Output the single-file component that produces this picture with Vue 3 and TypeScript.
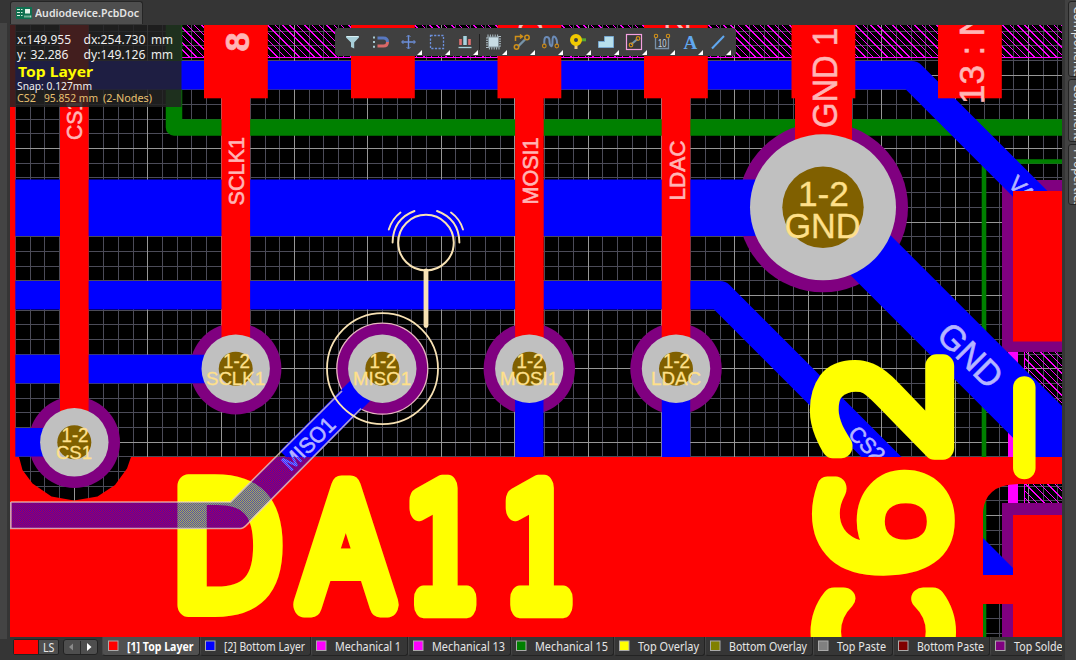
<script setup lang="ts">
interface Label { t: string; x: number; y: number; s: number; len: number; r?: number; c: string; b?: boolean }
interface Glyph { t: string; cx: number; cy: number; w: number; h: number; r: number; stroke: number }
interface LayerTab { name: string; color: string; width: number; pad: number; len: number; active?: boolean }

const minorX: number[] = []
const majorX: number[] = []
const minorY: number[] = []
const majorY: number[] = []
for (let k = -5; k < 70; k++) {
  const x = Math.floor(74.3 + k * 14.68)
  const y = Math.floor(75.2 + k * 14.68)
  ;(k % 5 === 0 ? majorX : minorX).push(x)
  ;(k % 5 === 0 ? majorY : minorY).push(y)
}

const topHatch = Array.from({ length: 128 }, (_, i) => 150 + i * 7.35)
const sideHatch = Array.from({ length: 30 }, (_, i) => 842 + i * 7.35)

// Rows of one-pixel dashes, shifted by one pixel on every other row.
const ditherRows = Array.from({ length: 72 }, (_, i) => 457 + i)

const padTops = [204, 351, 497.5, 644, 791.5, 938]

const PINK = '#ffb5b5'
const PALE = '#b5b5ff'
const GOLD = '#ffe08a'

const copperLabels: Label[] = [
  { t: 'CS1', x: 82, y: 140, s: 22, len: 41, r: -90, c: PINK },
  { t: '8', x: 249, y: 51.5, s: 34, len: 19, r: -90, c: PINK, b: true },
  { t: 'SCLK1', x: 244, y: 205.5, s: 22, len: 68.5, r: -90, c: PINK },
  { t: '10', x: 542, y: 57, s: 34, len: 38, r: -90, c: PINK },
  { t: 'MOSI1', x: 537.5, y: 204.5, s: 22, len: 67, r: -90, c: PINK },
  { t: '12', x: 689, y: 55, s: 34, len: 38, r: -90, c: PINK },
  { t: 'LDAC', x: 684.5, y: 200.5, s: 22, len: 60, r: -90, c: PINK },
  { t: 'GND 1', x: 837, y: 128, s: 35.5, len: 100, r: -90, c: PINK },
  { t: '13 : N', x: 984, y: 104, s: 35.5, len: 93, r: -90, c: PINK },
]

const diagLabels: Label[] = [
  { t: 'GND', x: 935, y: 337, s: 35, len: 76, r: 45, c: PALE },
  { t: 'CS2', x: 847, y: 435, s: 22, len: 41, r: 45, c: PALE },
  { t: 'VA', x: 1007, y: 185, s: 22, len: 28, r: 45, c: PALE },
]

const padLabels: Label[] = [
  { t: '1-2', x: 223, y: 368, s: 19.5, len: 27, c: GOLD },
  { t: 'SCLK1', x: 206, y: 385, s: 18.5, len: 59, c: GOLD },
  { t: '1-2', x: 369.5, y: 368, s: 19.5, len: 27, c: GOLD },
  { t: 'MISO1', x: 353, y: 385, s: 18.5, len: 58, c: GOLD },
  { t: '1-2', x: 516.5, y: 368, s: 19.5, len: 27, c: GOLD },
  { t: 'MOSI1', x: 500, y: 385, s: 18.5, len: 58, c: GOLD },
  { t: '1-2', x: 663, y: 368, s: 19.5, len: 27, c: GOLD },
  { t: 'LDAC', x: 651, y: 385, s: 18.5, len: 50, c: GOLD },
  { t: '1-2', x: 61.5, y: 441.5, s: 19.5, len: 27, c: GOLD },
  { t: 'CS1', x: 56, y: 458.5, s: 18.5, len: 36, c: GOLD },
  { t: '1-2', x: 798, y: 205.5, s: 35, len: 51, c: GOLD },
  { t: 'GND', x: 784.5, y: 237.5, s: 35, len: 76, c: GOLD },
]

const pads = [
  { x: 235.7, y: 368.7 },
  { x: 382.3, y: 368.7 },
  { x: 529.3, y: 368.7 },
  { x: 676, y: 368.7 },
  { x: 74.3, y: 442.3 },
]

const silk: Glyph[] = [
  { t: 'D', cx: 230.2, cy: 546, w: 107, h: 141, r: 0, stroke: 23 },
  { t: 'A', cx: 346, cy: 546, w: 110, h: 140, r: 0, stroke: 24 },
  { t: '1', cx: 442.4, cy: 546, w: 72, h: 140, r: 0, stroke: 23 },
  { t: '1', cx: 538.6, cy: 546, w: 72, h: 140, r: 0, stroke: 23 },
  { t: 'C', cx: 883, cy: 639, w: 106, h: 144.5, r: -90, stroke: 23 },
  { t: '6', cx: 883, cy: 523.3, w: 106, h: 144.5, r: -90, stroke: 23 },
  { t: '2', cx: 882.5, cy: 407.5, w: 107, h: 144.5, r: -90, stroke: 23 },
]

const ctx = document.createElement('canvas').getContext('2d')!
ctx.font = '200 100px "DejaVu Sans"'

// Scales a glyph so that its inked box, stroke included, fills the given size.
function fit(g: Glyph): string {
  const m = ctx.measureText(g.t)
  const l = m.actualBoundingBoxLeft
  const r = m.actualBoundingBoxRight
  const a = m.actualBoundingBoxAscent
  const d = m.actualBoundingBoxDescent
  const sx = (g.w - g.stroke) / (l + r)
  const sy = (g.h - g.stroke) / (a + d)
  return `translate(${g.cx} ${g.cy}) rotate(${g.r}) scale(${sx} ${sy}) translate(${-(r - l) / 2} ${(a - d) / 2})`
}

function spin(l: Label): string {
  return `translate(${l.x} ${l.y}) rotate(${l.r ?? 0})`
}

const hud: Label[] = [
  { t: 'x:149.955', x: 17, y: 44, s: 12.5, len: 54, c: '#f0f0f0' },
  { t: 'dx:254.730', x: 83.5, y: 44, s: 12.5, len: 62, c: '#f0f0f0' },
  { t: 'mm', x: 151, y: 44, s: 12.5, len: 22, c: '#f0f0f0' },
  { t: 'y:', x: 17, y: 59, s: 12.5, len: 9, c: '#f0f0f0' },
  { t: '32.286', x: 30.5, y: 59, s: 12.5, len: 38, c: '#f0f0f0' },
  { t: 'dy:149.126', x: 83.5, y: 59, s: 12.5, len: 62, c: '#f0f0f0' },
  { t: 'mm', x: 151, y: 59, s: 12.5, len: 22, c: '#f0f0f0' },
  { t: 'Top Layer', x: 18, y: 77, s: 14.5, len: 75, c: '#ffff00', b: true },
  { t: 'Snap: 0.127mm', x: 17, y: 90, s: 11, len: 75, c: '#f0f0f0' },
  { t: 'CS2', x: 17, y: 102, s: 11, len: 19, c: '#e8c070' },
  { t: '95.852 mm', x: 44, y: 102, s: 11, len: 54, c: '#e8c070' },
  { t: '(2-Nodes)', x: 103, y: 102, s: 11, len: 49, c: '#e8c070' },
]

const menuMarks = [419.5, 447.5, 475.5, 504.5, 532.5, 560.5, 588.5, 616.5, 644.5, 672.5, 700.5, 728.5]

const tabs: LayerTab[] = [
  { name: '[1] Top Layer', color: '#ff0000', width: 98, pad: 8, len: 66.5, active: true },
  { name: '[2] Bottom Layer', color: '#0000ff', width: 111, pad: 7, len: 81 },
  { name: 'Mechanical 1', color: '#ff00ff', width: 97, pad: 7, len: 66 },
  { name: 'Mechanical 13', color: '#ff00ff', width: 103, pad: 7, len: 73 },
  { name: 'Mechanical 15', color: '#008000', width: 103, pad: 7, len: 73 },
  { name: 'Top Overlay', color: '#ffff00', width: 91, pad: 7, len: 61 },
  { name: 'Bottom Overlay', color: '#808000', width: 108, pad: 7, len: 78 },
  { name: 'Top Paste', color: '#808080', width: 80, pad: 7, len: 49 },
  { name: 'Bottom Paste', color: '#800000', width: 97, pad: 7, len: 67 },
  { name: 'Top Solder', color: '#800080', width: 90, pad: 7, len: 53 },
]

const panels = [
  { name: 'Components', height: 76 },
  { name: 'Comments', height: 63 },
  { name: 'Properties', height: 61 },
]
</script>

<template>
  <div class="app">
    <aside class="left"></aside>
    <main class="main">
      <header class="docs">
        <div class="doc">
          <svg width="16" height="12" viewBox="0 0 16 12">
            <rect width="16" height="12" fill="#0f7050" />
            <path d="M1 2.500h3M1 5.500h3M1 8.500h3M5 2.500h1.500M5 5.500h1.500M5 8.500h1.500" stroke="#d8f0e0" stroke-width="1" />
            <path d="M9 2h5v4.500H9z" fill="#e4f4ea" />
            <path d="M8.500 9.500h1M10.500 9.500h1M12.500 9.500h1M14.200 9.500h1" stroke="#d8f0e0" stroke-width="2" />
          </svg>
          <svg width="108" height="18"><text x="0" y="13" textLength="104" lengthAdjust="spacingAndGlyphs" class="doc-name">Audiodevice.PcbDoc</text></svg>
        </div>
      </header>

      <svg class="board" width="1052" height="612" viewBox="10 25 1052 612">
        <defs>
          <clipPath id="topBand"><rect x="182" y="25" width="880" height="33" /></clipPath>
          <clipPath id="sideBand"><path d="M1024 352H1062V504H1024Z" /></clipPath>
          <clipPath id="dither"><path d="M10 502H230L275 457H314L255 516Q243 529 240 529H10Z" /></clipPath>
          <clipPath id="openArea"><rect x="10" y="25" width="1052" height="432" /></clipPath>
        </defs>
        <rect x="10" y="25" width="1052" height="612" fill="#000" />
        <g fill="#4b4b58" shape-rendering="crispEdges">
          <rect v-for="x in minorX" :key="'a' + x" :x="x" y="25" width="1" height="612" />
          <rect v-for="y in minorY" :key="'b' + y" x="10" :y="y" width="1052" height="1" />
        </g>
        <g fill="#969696" shape-rendering="crispEdges">
          <rect v-for="x in majorX" :key="'c' + x" :x="x" y="25" width="1" height="612" />
          <rect v-for="y in majorY" :key="'d' + y" x="10" :y="y" width="1052" height="1" />
        </g>

        <g clip-path="url(#topBand)" stroke="#f0f" stroke-width="1" shape-rendering="crispEdges">
          <path v-for="x in topHatch" :key="x" :d="`M${x} 25l33 33`" />
          <path d="M182 57.5H1062" />
        </g>
        <g clip-path="url(#sideBand)" stroke="#f0f" stroke-width="1" shape-rendering="crispEdges">
          <path v-for="x in sideHatch" :key="x" :d="`M${x} 352l160 160`" />
          <path d="M1024.5 352V504" />
        </g>

        <g fill="none" stroke="#008000">
          <path d="M174 25V127.5H1062" stroke-width="16.5" stroke-linejoin="round" />
          <path d="M984 637V161.5H1062" stroke-width="4.6" />
        </g>
        <rect x="1008" y="345" width="10" height="170" fill="#f0f" />

        <g fill="#800080">
          <rect x="1002" y="180" width="60" height="172" />
          <rect x="1002" y="503" width="60" height="134" />
          <circle v-for="p in pads" :key="p.x" :cx="p.x" :cy="p.y" r="45.7" />
          <circle cx="823" cy="207.3" r="85" />
        </g>
        <circle cx="382.3" cy="368.7" r="45.5" fill="none" stroke="#e8b8c0" stroke-width="1.3" />

        <g fill="none" stroke="#00f" stroke-width="28.4" stroke-linejoin="round">
          <path d="M15 75.3H911.6L1052 215.7" />
          <path d="M15 207.7H823L1080 464.7" stroke-width="56.5" />
          <path d="M15 295.3H719.8L900 475.5" />
          <path d="M15 369H235M15 442.3H74M529.3 369V460M676 369V460" />
          <path d="M382.3 368.7L290 461" />
        </g>
        <path d="M1013 378H1034L1062 406V457H1035L1013 437ZM983 538L1013 568V575H983Z" fill="#00f" />
        <g class="net" clip-path="url(#openArea)">
          <text
            v-for="l in diagLabels"
            :key="l.t"
            :transform="spin(l)"
            :font-size="l.s"
            :textLength="l.len"
            lengthAdjust="spacingAndGlyphs"
            :fill="l.c"
            :stroke="l.c"
          >{{ l.t }}</text>
        </g>

        <path
          fill="#f00"
          fill-rule="evenodd"
          d="M10 457H1062V637H10ZM19 457L22.5 470L32.5 483.5L51.5 496.5L74 500.5L97.5 496.5L115 485L127 468.5L131 457ZM983 575V512Q984 499 992 492Q1000 484.500 1018 484H1062V515H1013V575ZM983 604H1013V637H983Z"
        />
        <g fill="#f00">
          <rect x="10" y="25" width="5.300" height="435" />
          <rect x="60" y="25" width="28.600" height="417" />
          <rect x="221.500" y="98" width="28.600" height="265" />
          <rect x="515.100" y="98" width="28.600" height="265" />
          <rect x="661.700" y="98" width="28.600" height="265" />
          <rect x="795" y="98" width="57" height="60" />
          <rect v-for="x in padTops" :key="x" :x="x" y="25" width="63.800" height="73.300" />
          <rect x="1013" y="191" width="49" height="150.500" />
        </g>

        <g v-for="p in pads" :key="'p' + p.x">
          <circle :cx="p.x" :cy="p.y" r="34.200" fill="#c0c0c0" />
          <circle :cx="p.x" :cy="p.y" r="17" fill="#806000" />
        </g>
        <circle cx="823" cy="207.300" r="73" fill="#c0c0c0" />
        <circle cx="823" cy="207.300" r="40.700" fill="#806000" />

        <g class="net">
          <text
            v-for="l in copperLabels"
            :key="l.t"
            :transform="spin(l)"
            :font-size="l.s"
            :textLength="l.len"
            lengthAdjust="spacingAndGlyphs"
            :fill="l.c"
            :stroke="l.c"
            :font-weight="l.b ? 700 : 400"
          >{{ l.t }}</text>
        </g>
        <g class="net thin">
          <text
            v-for="(l, i) in padLabels"
            :key="'n' + i"
            :x="l.x"
            :y="l.y"
            :font-size="l.s"
            :textLength="l.len"
            lengthAdjust="spacingAndGlyphs"
            :fill="l.c"
            :stroke="l.c"
          >{{ l.t }}</text>
        </g>

        <g class="silk">
          <text v-for="(g, i) in silk" :key="i" :transform="fit(g)" :stroke-width="g.stroke">{{ g.t }}</text>
        </g>
        <path d="M1024.300 387.500V468" stroke="#ff0" stroke-width="22.500" stroke-linecap="round" />

        <g class="net">
          <text transform="translate(291 472) rotate(-45)" font-size="22" textLength="65" lengthAdjust="spacingAndGlyphs" :fill="PALE" :stroke="PALE">MISO1</text>
        </g>
        <g clip-path="url(#dither)">
          <rect x="10" y="457" width="320" height="72" fill="#00f" fill-opacity="0.32" />
          <g stroke="#00f" stroke-opacity="0.55" stroke-width="1" stroke-dasharray="1 1">
            <path v-for="y in ditherRows" :key="y" :d="`M${10 + (y % 2)} ${y + 0.5}H330`" />
          </g>
        </g>
        <g fill="none" stroke="#f4dcc0" stroke-opacity="0.72" stroke-width="1.700">
          <path d="M10.800 502V528.500H241Q245 528 252 519L361 408.500M10.800 502H230.500L342 391" />
          <path d="M335 398Q343 410 355 416" stroke-width="1" />
        </g>
        <g fill="none" stroke="#f8e2b4" stroke-width="2" stroke-linecap="round">
          <circle cx="382.500" cy="368.700" r="55.500" stroke-width="1.800" />
          <circle cx="426" cy="242.600" r="27.800" />
          <path d="M426 271V325.500" stroke-width="4.800" />
          <path d="M392.600 242.500Q393 219 414.500 211M388.800 229.500Q392 219 400.500 212.500M459.400 242.500Q459 219 437 211M463 229.500Q460 219 451 212.500" stroke-width="1.900" />
        </g>

        <rect x="10" y="25" width="171.500" height="82" fill="#232323" fill-opacity="0.86" />
        <g class="hud">
          <text
            v-for="(l, i) in hud"
            :key="i"
            :x="l.x"
            :y="l.y"
            :font-size="l.s"
            :textLength="l.len"
            lengthAdjust="spacingAndGlyphs"
            :fill="l.c"
            :font-weight="l.b ? 700 : 400"
          >{{ l.t }}</text>
        </g>

        <g class="toolbar">
          <rect x="335" y="28" width="401" height="28" rx="4" fill="#404040" />
          <path v-for="x in menuMarks" :key="x" :d="`M${x + 2.500} 50v5h-5z`" fill="#fff" />
          <path d="M346 36h13v1.500l-4.800 5v6l-3.200-1.500v-4.500l-5-5z" fill="#a8cfd8" />
          <path d="M347 36.500h11" stroke="#d8f0f4" />
          <g fill="none" stroke-width="3">
            <path d="M377.500 38h6q4 0 4 4" stroke="#5878c0" />
            <path d="M377.500 46h6q4 0 4-4" stroke="#d86868" />
            <path d="M374 36.500v12" stroke="#a8c8d0" stroke-width="2" stroke-dasharray="2 2.600" />
          </g>
          <path d="M408.500 35.500v13M402 42h13" stroke="#6c90dc" stroke-width="1.400" />
          <path d="M406.500 37l2-2 2 2M406.500 47l2 2 2-2M403.500 40l-2 2 2 2M413.500 40l2 2-2 2" fill="none" stroke="#6c90dc" stroke-width="0.900" />
          <rect x="430.500" y="35.500" width="13" height="13" fill="none" stroke="#6c90dc" stroke-width="1.300" stroke-dasharray="2.200 1.400" />
          <path d="M460.500 39v6M469.500 39v6" stroke="#e07070" stroke-width="2.600" />
          <path d="M465 36v9" stroke="#a8d4e0" stroke-width="3.500" />
          <path d="M458.500 47.500h13" stroke="#a8d4e0" stroke-width="1.300" />
          <path d="M479.500 34v16" stroke="#202020" />
          <rect x="487.500" y="36" width="12" height="12" fill="none" stroke="#b0c0c8" stroke-width="3" stroke-dasharray="1 1.400" />
          <rect x="488.500" y="37" width="10" height="10" fill="#c8dce4" stroke="#8898a0" />
          <path d="M518 46.500L525 39.500" stroke="#7894a8" stroke-width="2.400" />
          <g fill="none" stroke="#d09018" stroke-width="1.500">
            <circle cx="527" cy="37.500" r="2.200" />
            <circle cx="516.500" cy="47" r="2.200" />
            <path d="M515.500 41v-4.500h6M520 34.500l2.500 2-2.500 2" />
          </g>
          <path d="M544.500 46q-1-9 2-9t3 4 1.500 5 1.500-5 2.500-4 2 9" fill="none" stroke="#6c8cb8" stroke-width="2" />
          <circle cx="544.300" cy="46" r="1.800" fill="#404040" stroke="#c88818" stroke-width="1.200" />
          <circle cx="556.800" cy="46" r="1.800" fill="#404040" stroke="#c88818" stroke-width="1.200" />
          <path d="M579 39.800h7" stroke="#58a830" stroke-width="3" />
          <path d="M576 44v5" stroke="#f0c878" stroke-width="3" />
          <circle cx="576" cy="40" r="4" fill="none" stroke="#f0c800" stroke-width="4" />
          <path d="M598.500 47.500v-6h6v-5h9v11z" fill="#b8e0ec" stroke="#78a8d0" />
          <rect x="626.500" y="34.500" width="15" height="15" fill="#383838" stroke="#f4a0e0" stroke-width="1.200" />
          <path d="M631 44.500L637.500 39" stroke="#7894a8" stroke-width="2" />
          <circle cx="631" cy="45" r="1.800" fill="none" stroke="#d09018" stroke-width="1.200" />
          <circle cx="638" cy="38.500" r="1.800" fill="none" stroke="#d09018" stroke-width="1.200" />
          <path d="M655.500 38v10.500h13V38" fill="none" stroke="#7890a8" stroke-width="1.300" />
          <circle cx="656" cy="36" r="1.700" fill="none" stroke="#d09018" stroke-width="1.100" />
          <circle cx="668" cy="36" r="1.700" fill="none" stroke="#d09018" stroke-width="1.100" />
          <text x="658" y="46.500" font-size="10" textLength="8.500" lengthAdjust="spacingAndGlyphs" fill="#c8d8e0" class="cond">10</text>
          <text x="683.500" y="49" font-size="19" fill="#60a8f0" class="serif">A</text>
          <path d="M712 48.500L724 36" stroke="#60a8f0" stroke-width="2" />
        </g>
      </svg>

      <footer class="layers">
        <div class="ls">
          <span class="ls-color"></span>
          <svg width="19" height="14"><text x="4" y="11.500" textLength="11.500" lengthAdjust="spacingAndGlyphs" class="tab-name">LS</text></svg>
        </div>
        <div class="arrows">
          <svg width="33" height="14">
            <path d="M9 3.500v7L5 7z" fill="#8a8a8a" />
            <path d="M16.500 1v13" stroke="#2a2a2a" />
            <path d="M23 3v8l4.500-4z" fill="#fff" />
          </svg>
        </div>
        <div class="tabs">
          <div v-for="t in tabs" :key="t.name" class="tab" :class="{ active: t.active }" :style="{ width: t.width + 'px' }">
            <svg :width="t.width - 2" height="17">
              <rect :x="t.pad - 2.500" y="4" width="9.500" height="9.500" :fill="t.color" stroke="#aaa" />
              <text :x="t.pad + 16" y="14" :textLength="t.len" lengthAdjust="spacingAndGlyphs" class="tab-name">{{ t.name }}</text>
            </svg>
          </div>
        </div>
      </footer>
    </main>
    <aside class="right">
      <div v-for="p in panels" :key="p.name" class="panel" :style="{ height: p.height + 'px' }"><span>{{ p.name }}</span></div>
    </aside>
  </div>
</template>

<style>
html, body { margin: 0; overflow: hidden; background: #333; }
</style>

<style scoped>
.app { display: flex; width: 1076px; height: 660px; overflow: hidden; background: #353535; font-family: "Noto Sans", sans-serif; }
svg { display: block; flex: none; }
.left { width: 7px; height: 616px; margin-top: 23px; background: #444; flex: none; }
.main { width: 1055px; padding-left: 3px; box-sizing: border-box; flex: none; overflow: hidden; }
.docs { height: 25px; display: flex; align-items: flex-start; }
.doc { display: flex; align-items: center; gap: 3px; width: 133px; height: 23px; margin-top: 1px; box-sizing: border-box; padding-left: 5px; background: #4e4e4e; border: 1px solid #252525; border-bottom: 0; border-radius: 3px 3px 0 0; }
.doc-name { font: 600 11.500px "Noto Sans", sans-serif; fill: #e4e4e4; }
.net { font-family: "Liberation Sans", Arial, sans-serif; }
.net text { stroke-width: 0.6px; }
.thin text { stroke-width: 0.3px; }
.silk text { font: 200 100px "DejaVu Sans", sans-serif; fill: #ff0; stroke: #ff0; stroke-linejoin: round; vector-effect: non-scaling-stroke; }
.hud text { font-family: "Noto Sans", sans-serif; }
.cond { font-family: "Liberation Sans", Arial, sans-serif; }
.serif { font-family: "Liberation Serif", serif; font-weight: 700; }
.layers { display: flex; height: 23px; align-items: flex-start; background: #353535; }
.ls { display: flex; height: 14px; margin: 2px 0 0 3px; border: 1px solid #222; border-radius: 2px; background: #4e4e4e; }
.ls-color { width: 24px; background: #f00; border-right: 1px solid #222; }
.arrows { margin: 2px 0 0 4px; height: 14px; border: 1px solid #222; border-radius: 3px; background: #4e4e4e; }
.tabs { display: flex; margin-left: 4px; overflow: hidden; }
.tab { flex: none; box-sizing: border-box; height: 19px; border: 1px solid #232323; border-top: 0; border-left-color: #454545; border-radius: 0 0 3px 3px; background: #363636; }
.tab.active { background: #505050; }
.tab-name { font: 12px "Noto Sans", sans-serif; fill: #e6e6e6; }
.active .tab-name { font-weight: 700; fill: #fff; }
.right { flex: 1; padding: 1px 0 0 3px; background: #424242; border-left: 3px solid #353535; display: flex; flex-direction: column; gap: 2px; overflow: hidden; box-sizing: border-box; }
.panel { flex: none; width: 24px; box-sizing: border-box; border: 1px solid #232323; border-radius: 3px; background: #505050; overflow: hidden; }
.panel span { display: block; writing-mode: vertical-rl; font-size: 12px; line-height: 16px; padding: 4px 0 0 1px; color: #e6e6e6; }
</style>
